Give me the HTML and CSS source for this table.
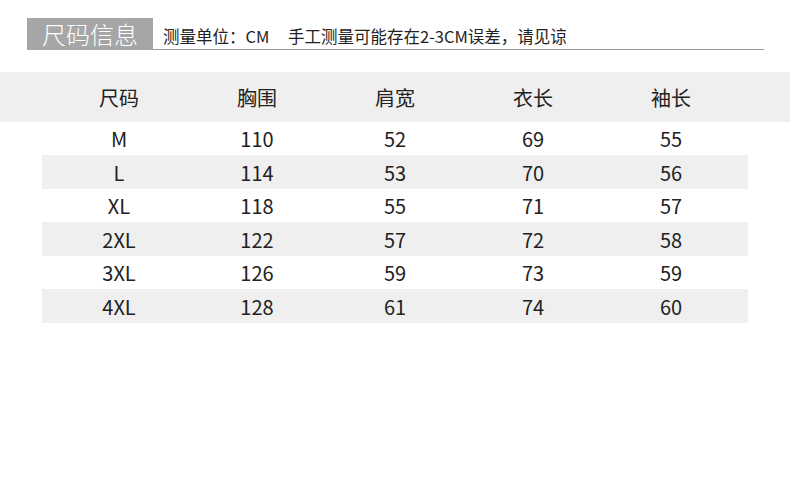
FILE: index.html
```html
<!DOCTYPE html>
<html lang="zh">
<head>
<meta charset="utf-8">
<title>尺码信息</title>
<link rel="stylesheet" href="styles.css">
</head>
<body>
<div class="page">
  <div class="title-row">
    <div class="title-box">尺码信息</div>
    <div class="subtitle">测量单位：CM&nbsp;&nbsp;&nbsp;&nbsp;&nbsp;手工测量可能存在2-3CM误差，请见谅</div>
  </div>
  <div class="head-band">
    <div class="cols">
      <div class="cell">尺码</div>
      <div class="cell">胸围</div>
      <div class="cell">肩宽</div>
      <div class="cell">衣长</div>
      <div class="cell">袖长</div>
    </div>
  </div>
  <div class="table">
    <div class="cols row"><div class="cell">M</div><div class="cell">110</div><div class="cell">52</div><div class="cell">69</div><div class="cell">55</div></div>
    <div class="cols row alt"><div class="cell">L</div><div class="cell">114</div><div class="cell">53</div><div class="cell">70</div><div class="cell">56</div></div>
    <div class="cols row"><div class="cell">XL</div><div class="cell">118</div><div class="cell">55</div><div class="cell">71</div><div class="cell">57</div></div>
    <div class="cols row alt"><div class="cell">2XL</div><div class="cell">122</div><div class="cell">57</div><div class="cell">72</div><div class="cell">58</div></div>
    <div class="cols row"><div class="cell">3XL</div><div class="cell">126</div><div class="cell">59</div><div class="cell">73</div><div class="cell">59</div></div>
    <div class="cols row alt"><div class="cell">4XL</div><div class="cell">128</div><div class="cell">61</div><div class="cell">74</div><div class="cell">60</div></div>
  </div>
</div>
</body>
</html>
```
FILE: styles.css
```css
html, body {
  margin: 0;
  padding: 0;
  background: #ffffff;
}
body {
  font-family: "Noto Sans CJK SC", "Noto Sans", sans-serif;
  color: #222222;
}
.page {
  width: 790px;
  height: 481px;
  overflow: hidden;
}
.title-row {
  display: flex;
  margin: 18px 0 0 27px;
  width: 737px;
  height: 32px;
}
.title-box {
  width: 126px;
  height: 32px;
  background: #a6a6a6;
  color: #ffffff;
  font-size: 24px;
  font-weight: 300;
  line-height: 31px;
  text-align: center;
}
.subtitle {
  flex: 1;
  box-sizing: border-box;
  height: 32px;
  border-bottom: 1px solid #9a9a9a;
  padding-left: 10px;
  font-size: 16.5px;
  line-height: 36px;
  color: #222222;
  white-space: nowrap;
}
.head-band {
  margin-top: 22px;
  height: 50px;
  background: #efefef;
  display: flex;
  justify-content: center;
}
.cols {
  display: grid;
  grid-template-columns: repeat(5, 138px);
  justify-content: center;
  align-items: center;
  font-size: 20px;
}
.head-band .cols {
  width: 706px;
  height: 50px;
}
.cell {
  text-align: center;
}
.table {
  margin-left: 42px;
  width: 706px;
}
.row {
  height: 33px;
}
.row.alt {
  height: 34px;
  background: #efefef;
}
```
